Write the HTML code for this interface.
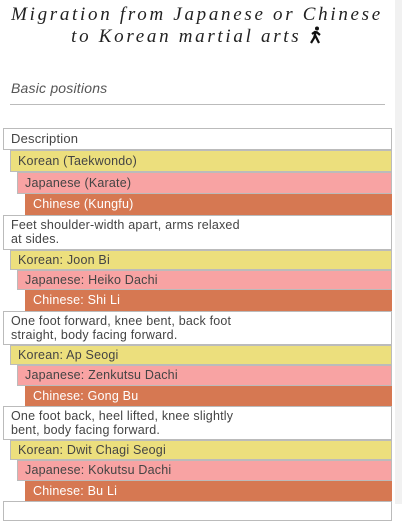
<!DOCTYPE html>
<html><head><style>
body{margin:0;width:402px;height:504px;overflow:hidden;background:#fff;position:relative;font-family:"Liberation Sans",sans-serif;}
.sb{position:absolute;left:395px;top:0;width:7px;height:504px;background:#f1f1f1;}
h1{position:absolute;left:0;width:394px;top:4px;margin:0;text-align:center;font-family:"Liberation Serif",serif;font-style:italic;font-weight:normal;font-size:19px;letter-spacing:2.7px;line-height:22px;color:#222;}
.bp{position:absolute;left:11px;top:80px;font-style:italic;font-size:14px;color:#555;letter-spacing:0.2px;}
.hr{position:absolute;left:10px;top:104px;width:375px;height:1px;background:#bbb;}
.r{position:absolute;right:10px;box-sizing:border-box;border:1px solid #bbb;font-size:12.5px;padding-left:7px;line-height:18px;color:#444;letter-spacing:0.2px;}
.d{left:3px;background:#fff;padding-left:7px;}
.k{left:10px;background:#ecdf7d;}
.j{left:17px;background:#f8a3a3;}
.c{left:25px;background:#d67852;color:#fff;border-color:#d67852;}
.d2{line-height:14px;padding-top:2px;padding-right:140px;}
</style></head><body>
<div class="sb"></div>
<h1>Migration from Japanese or Chinese<br>to Korean martial arts <svg width="14" height="18" viewBox="0 0 14 18" style="vertical-align:-2px"><circle cx="8" cy="2.5" r="2" fill="#111"/><path d="M7 5 L5 12 L2 17 M6 9 L10 17 M6.5 5.5 L3 8 M7.5 6 L11 9" stroke="#111" stroke-width="2.2" fill="none"/></svg></h1>
<div class="bp">Basic positions</div>
<div class="hr"></div>
<div class="r d" style="top:128px;height:22px;font-size:13px;line-height:20px">Description</div>
<div class="r k" style="top:150px;height:22px;line-height:20px">Korean (Taekwondo)</div>
<div class="r j" style="top:172px;height:22px;line-height:20px">Japanese (Karate)</div>
<div class="r c" style="top:194px;height:21px;line-height:19px">Chinese (Kungfu)</div>

<div class="r d d2" style="top:215px;height:35px"><span style="white-space:nowrap">Feet shoulder-width apart, arms relaxed</span><br>at sides.</div>
<div class="r k" style="top:250px;height:20px">Korean: Joon Bi</div>
<div class="r j" style="top:270px;height:20px">Japanese: Heiko Dachi</div>
<div class="r c" style="top:290px;height:21px">Chinese: Shi Li</div>

<div class="r d d2" style="top:311px;height:34px"><span style="white-space:nowrap">One foot forward, knee bent, back foot</span><br>straight, body facing forward.</div>
<div class="r k" style="top:345px;height:20px">Korean: Ap Seogi</div>
<div class="r j" style="top:365px;height:21px">Japanese: Zenkutsu Dachi</div>
<div class="r c" style="top:386px;height:20px">Chinese: Gong Bu</div>

<div class="r d d2" style="top:406px;height:34px"><span style="white-space:nowrap">One foot back, heel lifted, knee slightly</span><br>bent, body facing forward.</div>
<div class="r k" style="top:440px;height:20px">Korean: Dwit Chagi Seogi</div>
<div class="r j" style="top:460px;height:21px">Japanese: Kokutsu Dachi</div>
<div class="r c" style="top:481px;height:20px">Chinese: Bu Li</div>
<div class="r d" style="top:501px;height:20px"></div>
</body></html>
